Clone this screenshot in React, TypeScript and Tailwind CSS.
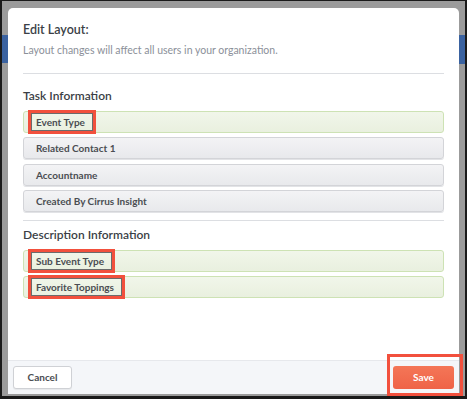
import React from 'react';

type Field = { label: string; match?: boolean; flagged?: boolean };

const taskFields: Field[] = [
  { label: 'Event Type', match: true, flagged: true },
  { label: 'Related Contact 1' },
  { label: 'Accountname' },
  { label: 'Created By Cirrus Insight' },
];

const descFields: Field[] = [
  { label: 'Sub Event Type', match: true, flagged: true },
  { label: 'Favorite Toppings', match: true, flagged: true },
];

function FieldRow({ field }: { field: Field }) {
  return (
    <div
      className={
        field.match
          ? 'flex h-[22px] items-center rounded-[3px] border border-[#cde2b4] bg-gradient-to-b from-[#f1f6ea] to-[#e9f0df] pl-[12px]'
          : 'flex h-[22px] items-center rounded-[3px] border border-[#d3d4d8] bg-gradient-to-b from-[#f3f3f5] to-[#e8e9ec] pl-[12px] shadow-[0_1px_0_#e2e3e6]'
      }
    >
      <span className="relative text-[10px] font-bold leading-none text-[#4a4d52]">
        {field.label}
        {field.flagged && (
          <span className="pointer-events-none absolute -top-[7px] -bottom-[7px] -left-[8px] -right-[11px] border-[3px] border-[#f2503d]">
            <span className="block h-full w-full border border-[#6b6b6b]" />
          </span>
        )}
      </span>
    </div>
  );
}

function Section({ title, fields, className }: { title: string; fields: Field[]; className: string }) {
  return (
    <div className={className}>
      <h2 className="h-[18px] text-[12px] font-semibold leading-[18px] text-[#3b3f46]">{title}</h2>
      <div className="mt-[6px] flex flex-col gap-[4.3px]">
        {fields.map((f) => (
          <FieldRow key={f.label} field={f} />
        ))}
      </div>
    </div>
  );
}

export default function App() {
  return (
    <div className="relative h-[399px] w-[467px] overflow-hidden border-t border-l-2 border-r-2 border-b-[3px] border-[#1a1a1a] bg-[#9b9b9b] font-[Lato,sans-serif]">
      {/* page behind the overlay */}
      <div className="absolute left-0 top-[34px] h-[28px] w-[6px] bg-[#3a62a0]" />
      <div className="absolute right-0 top-[34px] h-[29px] w-[6px] bg-[#3a62a0]" />

      <div className="flex h-full px-[6px] pt-[7px] pb-[2px]">
        <div className="flex flex-1 flex-col overflow-hidden rounded-t-[5px] bg-white">
          <div className="flex flex-1 flex-col px-[15px] pt-[13px]">
            <h1 className="h-[18px] text-[12.5px] font-semibold leading-[18px] text-[#3b3f46]">Edit Layout:</h1>
            <p className="mt-[3px] h-[16px] text-[10.5px] leading-[16px] text-[#8b9099]">
              Layout changes will affect all users in your organization.
            </p>
            <div className="mt-[15px] h-px bg-[#dcdee2]" />

            <Section title="Task Information" fields={taskFields} className="mt-[13px]" />

            <div className="mt-[8px] h-px bg-[#dcdee2]" />

            <Section title="Description Information" fields={descFields} className="mt-[5px]" />
          </div>

          <div className="flex h-[34px] items-start justify-between border-t border-[#e6e8ec] bg-[#f4f6f9] px-[5px] pt-[5px]">
            <button className="h-[23px] w-[59px] rounded-[3px] border border-[#cfd1d5] bg-white text-[10px] font-bold text-[#4a4d52] shadow-[0_1px_1px_rgba(0,0,0,0.06)]">
              Cancel
            </button>
            <button className="h-[23px] w-[61px] rounded-[3px] bg-gradient-to-b from-[#f47657] to-[#ef6347] text-[10px] font-bold text-white">
              Save
            </button>
          </div>
        </div>
      </div>

      {/* annotation around Save */}
      <div className="pointer-events-none absolute left-[385px] top-[353px] h-[42px] w-[76px] border-[3px] border-[#f2503d]" />
    </div>
  );
}
